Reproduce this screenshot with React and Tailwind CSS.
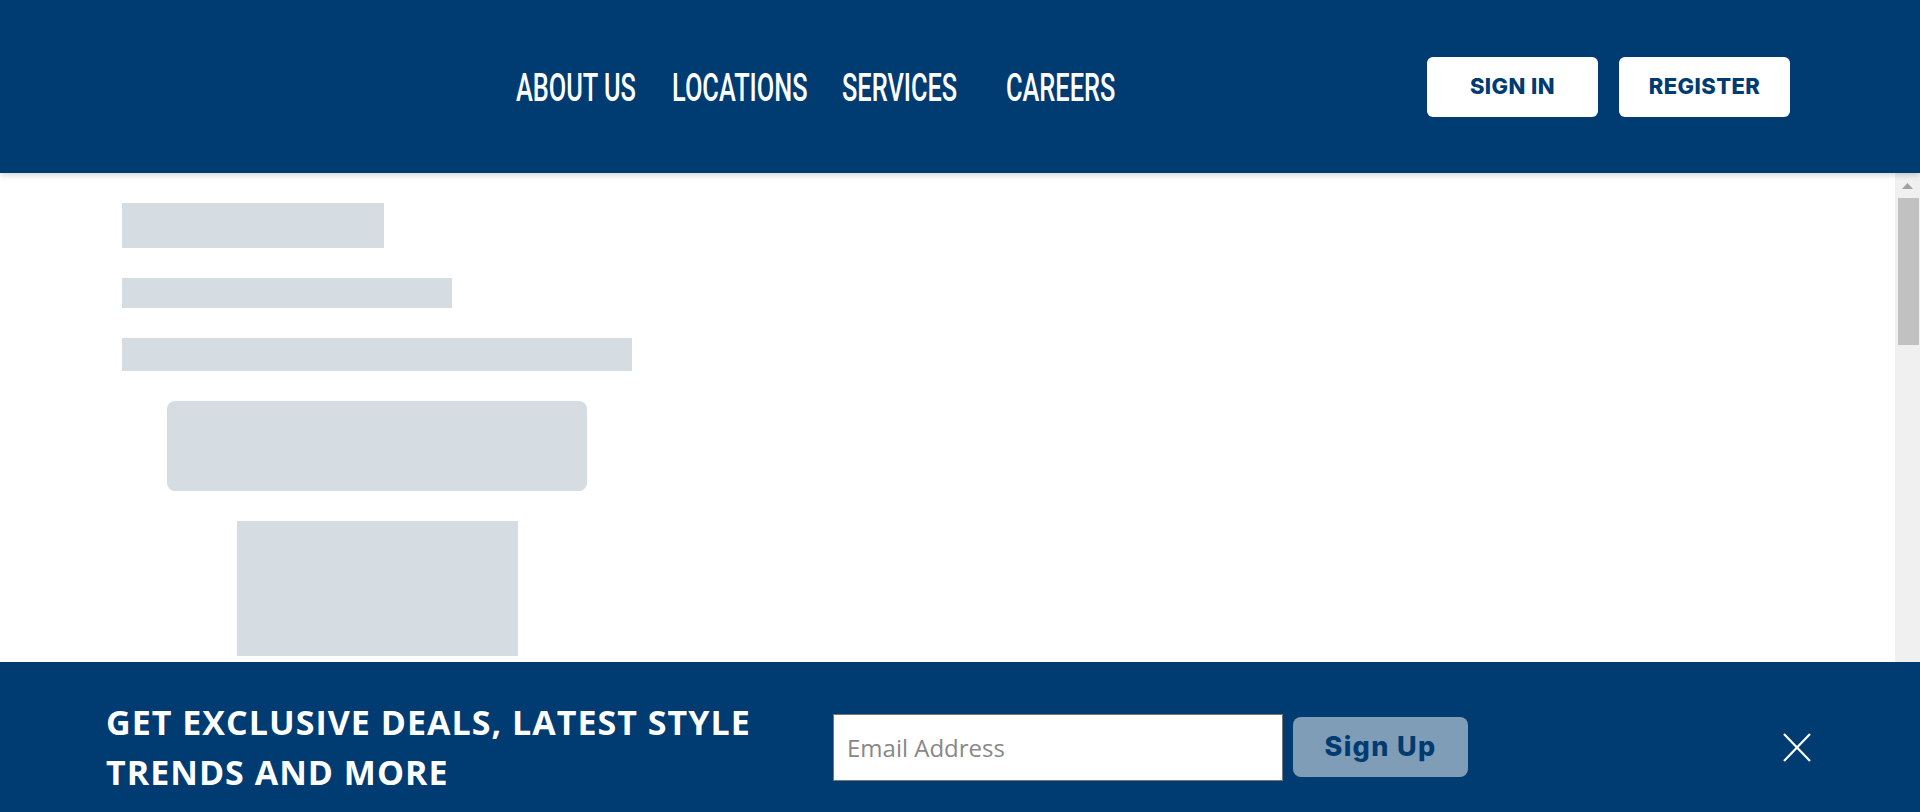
import React from 'react'

const navItems = [
  { label: 'ABOUT US', width: 'w-[156px]' },
  { label: 'LOCATIONS', width: 'w-[170px]' },
  { label: 'SERVICES', width: 'w-[164px]' },
  { label: 'CAREERS', width: 'w-[108px]' },
]

const App = () => {
  return (
    <div className="h-screen w-full flex flex-col bg-white overflow-hidden">
      {/* Header */}
      <header className="relative z-10 h-[173px] shrink-0 bg-[#003b71] flex items-center shadow-[0_2px_6px_rgba(0,0,0,0.18)]">
        <nav className="flex pl-[516px] pt-[2px]">
          {navItems.map((item) => (
            <a key={item.label} href="#" className={`${item.width} block overflow-visible whitespace-nowrap`}>
              <span className="inline-block origin-left scale-x-[0.65] text-white text-[39px] leading-[46px] font-medium font-['Roboto',sans-serif]">
                {item.label}
              </span>
            </a>
          ))}
        </nav>
        <div className="ml-auto pr-[130px] flex gap-[21px]">
          <button className="w-[171px] h-[60px] bg-white rounded-md text-[#003b71] text-[22px] font-extrabold tracking-[0.02em] font-['Inter',sans-serif]">
            SIGN IN
          </button>
          <button className="w-[171px] h-[60px] bg-white rounded-md text-[#003b71] text-[22px] font-extrabold tracking-[0.02em] font-['Inter',sans-serif]">
            REGISTER
          </button>
        </div>
      </header>

      {/* Body */}
      <div className="flex flex-1 min-h-0">
        <main className="flex-1 pl-[122px] pt-[30px]">
          <div className="w-[510px] flex flex-col gap-[30px]">
            <div className="w-[262px] h-[45px] bg-[#d5dde3]" />
            <div className="w-[330px] h-[30px] bg-[#d5dde3]" />
            <div className="w-full h-[33px] bg-[#d5dde3]" />
            <div className="self-center w-[420px] h-[90px] rounded-lg bg-[#d5dde3]" />
            <div className="self-center w-[281px] h-[135px] bg-[#d5dde3]" />
            <div className="w-[330px] h-[30px] bg-[#d5dde3]" />
          </div>
        </main>

        {/* Scrollbar */}
        <aside className="w-[25px] shrink-0 bg-[#f0f0f0] flex flex-col items-center">
          <svg className="mt-[10px]" width="11" height="6" viewBox="0 0 11 6">
            <polygon points="5.5,0 11,6 0,6" fill="#a3a3a3" />
          </svg>
          <div className="mt-[9px] ml-[2px] w-[21px] h-[147px] bg-[#c1c1c1]" />
        </aside>
      </div>

      {/* Newsletter bar */}
      <div className="fixed bottom-0 left-0 right-0 z-20 h-[150px] bg-[#003b71] pt-[20px] flex items-center">
        <h2 className="pl-[106px] w-[790px] shrink-0 text-white text-[34px] leading-[50px] font-bold tracking-[0.03em] font-['Open_Sans',sans-serif]">
          GET EXCLUSIVE DEALS, LATEST STYLE TRENDS AND MORE
        </h2>
        <input
          type="email"
          placeholder="Email Address"
          className="ml-[43px] w-[450px] h-[67px] bg-white border border-[#767676] pl-[13px] text-[24px] text-[#333] placeholder:text-[#888] font-['Open_Sans',sans-serif] outline-none"
        />
        <button className="ml-[10px] w-[175px] h-[60px] rounded-lg bg-[#809db8] text-[#003b71] text-[27px] font-extrabold tracking-[0.05em] font-['Inter',sans-serif]">
          Sign Up
        </button>
        <button className="ml-auto mr-[109px] w-[28px] h-[29px]" aria-label="Close">
          <svg width="28" height="29" viewBox="0 0 28 29" fill="none" stroke="white" strokeWidth="2.2">
            <line x1="1" y1="1" x2="27" y2="28" />
            <line x1="27" y1="1" x2="1" y2="28" />
          </svg>
        </button>
      </div>
    </div>
  )
}

export default App
